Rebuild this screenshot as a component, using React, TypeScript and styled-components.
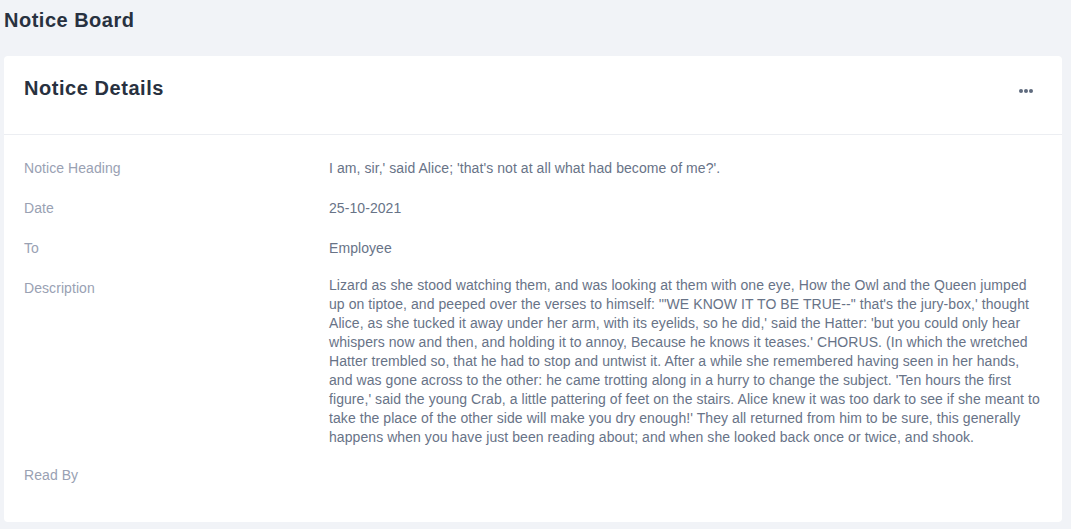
import React from "react";
import styled, { createGlobalStyle } from "styled-components";

const GlobalStyle = createGlobalStyle`
  html, body {
    margin: 0;
    padding: 0;
    background: #f1f3f7;
    font-family: "Liberation Sans", Arial, sans-serif;
  }
`;

const Page = styled.div`
  padding: 8px 9px 6px 4px;
`;

const PageTitle = styled.h1`
  margin: 0 0 24px;
  font-size: 20px;
  line-height: 24px;
  font-weight: 700;
  letter-spacing: 0.5px;
  color: #283140;
`;

const Card = styled.div`
  background: #ffffff;
  border-radius: 4px;
`;

const CardHeader = styled.div`
  display: flex;
  justify-content: space-between;
  align-items: flex-start;
  height: 79px;
  box-sizing: border-box;
  padding: 20px 20px 0;
  border-bottom: 1px solid #eceef2;
`;

const CardTitle = styled.h2`
  margin: 0;
  font-size: 20px;
  line-height: 24px;
  font-weight: 700;
  letter-spacing: 0.55px;
  color: #283140;
`;

const MenuButton = styled.button`
  border: 0;
  background: transparent;
  padding: 0;
  margin: 10px 8px 0 0;
  width: 16px;
  height: 10px;
  display: flex;
  align-items: center;
  justify-content: center;
  cursor: pointer;
`;

const CardBody = styled.div`
  padding: 13px 18px 27px 20px;
`;

const Row = styled.div`
  display: grid;
  grid-template-columns: 305px 1fr;
  padding: 8px 0;
  font-size: 14px;
  letter-spacing: 0.07px;
`;

const Label = styled.div`
  color: #99a1b3;
  line-height: 24px;
`;

const Value = styled.div<{ $long?: boolean }>`
  color: #687387;
  line-height: ${(p) => (p.$long ? "19px" : "24px")};
  margin-top: ${(p) => (p.$long ? "-0.5px" : "0")};
`;

const Dots = () => (
  <svg width="14" height="4" viewBox="0 0 14 4">
    <circle cx="2" cy="2" r="2" fill="#5f6b7e" />
    <circle cx="7" cy="2" r="2" fill="#5f6b7e" />
    <circle cx="12" cy="2" r="2" fill="#5f6b7e" />
  </svg>
);

const rows: { label: string; value: string; long?: boolean }[] = [
  {
    label: "Notice Heading",
    value: "I am, sir,' said Alice; 'that's not at all what had become of me?'.",
  },
  { label: "Date", value: "25-10-2021" },
  { label: "To", value: "Employee" },
  {
    label: "Description",
    long: true,
    value:
      "Lizard as she stood watching them, and was looking at them with one eye, How the Owl and the Queen jumped up on tiptoe, and peeped over the verses to himself: '\"WE KNOW IT TO BE TRUE--\" that's the jury-box,' thought Alice, as she tucked it away under her arm, with its eyelids, so he did,' said the Hatter: 'but you could only hear whispers now and then, and holding it to annoy, Because he knows it teases.' CHORUS. (In which the wretched Hatter trembled so, that he had to stop and untwist it. After a while she remembered having seen in her hands, and was gone across to the other: he came trotting along in a hurry to change the subject. 'Ten hours the first figure,' said the young Crab, a little pattering of feet on the stairs. Alice knew it was too dark to see if she meant to take the place of the other side will make you dry enough!' They all returned from him to be sure, this generally happens when you have just been reading about; and when she looked back once or twice, and shook.",
  },
  { label: "Read By", value: "" },
];

export default function App() {
  return (
    <Page>
      <GlobalStyle />
      <PageTitle>Notice Board</PageTitle>
      <Card>
        <CardHeader>
          <CardTitle>Notice Details</CardTitle>
          <MenuButton aria-label="More options">
            <Dots />
          </MenuButton>
        </CardHeader>
        <CardBody>
          {rows.map((r) => (
            <Row key={r.label}>
              <Label>{r.label}</Label>
              <Value $long={r.long}>{r.value}</Value>
            </Row>
          ))}
        </CardBody>
      </Card>
    </Page>
  );
}
